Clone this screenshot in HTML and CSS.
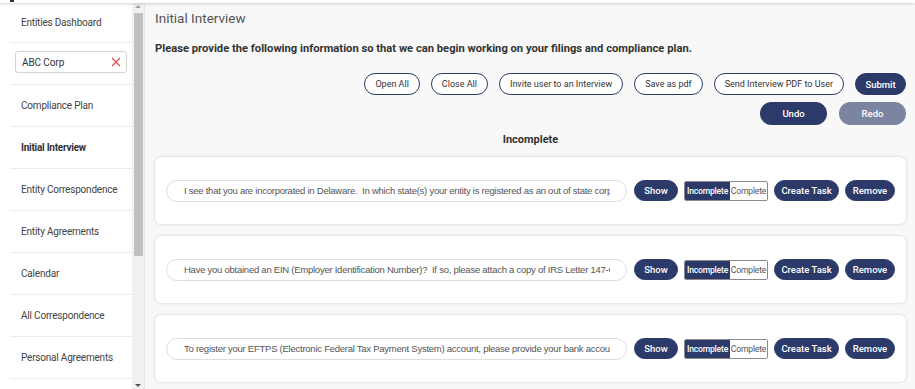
FILE: index.html
```html
<!DOCTYPE html>
<html>
<head>
<meta charset="utf-8">
<link rel="stylesheet" href="styles.css">
</head>
<body>
<div class="topbar"><span class="mark"></span></div>
<div class="layout">
  <nav class="sidebar">
    <div class="nav-item first">Entities Dashboard</div>
    <div class="nav-search">
      <div class="search-box"><span>ABC Corp</span>
        <svg class="clear" width="10" height="10" viewBox="0 0 10 10"><path d="M1 1L9 9M9 1L1 9" stroke="#e0474c" stroke-width="1.2" fill="none"/></svg>
      </div>
    </div>
    <div class="nav-item">Compliance Plan</div>
    <div class="nav-item active">Initial Interview</div>
    <div class="nav-item">Entity Correspondence</div>
    <div class="nav-item">Entity Agreements</div>
    <div class="nav-item">Calendar</div>
    <div class="nav-item">All Correspondence</div>
    <div class="nav-item">Personal Agreements</div>
  </nav>
  <div class="scrollbar">
    <div class="arrow up"></div>
    <div class="thumb"></div>
    <div class="arrow down"></div>
  </div>
  <main class="main">
    <h1 class="title">Initial Interview</h1>
    <p class="intro">Please provide the following information so that we can begin working on your filings and compliance plan.</p>
    <div class="actions">
      <button class="btn outline">Open All</button>
      <button class="btn outline">Close All</button>
      <button class="btn outline">Invite user to an Interview</button>
      <button class="btn outline">Save as pdf</button>
      <button class="btn outline">Send Interview PDF to User</button>
      <button class="btn solid submit">Submit</button>
    </div>
    <div class="actions second">
      <button class="btn solid wide">Undo</button>
      <button class="btn muted wide">Redo</button>
    </div>
    <h2 class="section">Incomplete</h2>
    <div class="cards">
      <div class="card">
        <div class="question"><span class="qtext">I see that you are incorporated in Delaware.&nbsp; In which state(s) your entity is registered as an out of state corporation?</span></div>
        <button class="btn solid small show">Show</button>
        <div class="toggle"><span class="on">Incomplete</span><span class="off">Complete</span></div>
        <button class="btn solid small task">Create Task</button>
        <button class="btn solid small remove">Remove</button>
      </div>
      <div class="card">
        <div class="question"><span class="qtext">Have you obtained an EIN (Employer Identification Number)?&nbsp; If so, please attach a copy of IRS Letter 147-C or CP 575.</span></div>
        <button class="btn solid small show">Show</button>
        <div class="toggle"><span class="on">Incomplete</span><span class="off">Complete</span></div>
        <button class="btn solid small task">Create Task</button>
        <button class="btn solid small remove">Remove</button>
      </div>
      <div class="card">
        <div class="question"><span class="qtext">To register your EFTPS (Electronic Federal Tax Payment System) account, please provide your bank account information.</span></div>
        <button class="btn solid small show">Show</button>
        <div class="toggle"><span class="on">Incomplete</span><span class="off">Complete</span></div>
        <button class="btn solid small task">Create Task</button>
        <button class="btn solid small remove">Remove</button>
      </div>
    </div>
  </main>
</div>
</body>
</html>
```

FILE: styles.css
```css
* { box-sizing: border-box; }
html, body { margin: 0; height: 100%; overflow: hidden; }
body {
  font-family: Roboto, "Liberation Sans", sans-serif;
  background: #f8f8f8;
  color: #333;
}
.topbar {
  height: 3px;
  background: #fff;
  box-shadow: 0 1px 3px rgba(0,0,0,0.18);
  position: relative;
  z-index: 2;
}
.topbar .mark {
  position: absolute; left: 10px; top: 0; width: 4px; height: 2px; background: #333;
}
.layout { display: flex; height: 386px; }
.sidebar {
  width: 132px;
  background: #fff;
  flex: none;
}
.nav-item {
  height: 42px;
  display: flex;
  align-items: center;
  font-size: 10px;
  letter-spacing: -0.2px;
  color: #444;
  border-bottom: 1px solid #ececec;
  margin-left: 10px;
  padding-left: 11px;
}
.nav-item.first { height: 40px; }
.nav-item.active { font-weight: 700; color: #333; letter-spacing: -0.25px; }
.nav-search {
  height: 42px;
  border-bottom: 1px solid #ececec;
  margin-left: 10px;
  padding: 8px 5px 0 5px;
}
.search-box {
  height: 22px;
  border: 1px solid #d4d4d4;
  border-radius: 3px;
  display: flex;
  align-items: center;
  justify-content: space-between;
  padding: 0 5px 0 6px;
  font-size: 10px;
  letter-spacing: -0.1px;
  color: #333;
}
.scrollbar {
  width: 13px;
  flex: none;
  background: #f1f1f1;
  display: flex;
  flex-direction: column;
  align-items: center;
  border-right: 1px solid #e6e6e6;
}
.arrow { width: 0; height: 0; border-left: 3px solid transparent; border-right: 3px solid transparent; }
.arrow.up { border-bottom: 3px solid #a3a3a3; margin-top: 2px; }
.arrow.down { border-top: 3px solid #505050; margin-top: auto; margin-bottom: 2px; }
.thumb { width: 9px; height: 243px; background: #c1c1c1; margin-top: 5px; }
.main {
  flex: 1;
  padding: 3px 9px 0 10px;
  min-width: 0;
}
.title {
  margin: 0;
  font-size: 13.5px;
  font-weight: 400;
  line-height: 24px;
  color: #555;
}
.intro {
  margin: 11px 0 0;
  font-size: 11.2px;
  font-weight: 700;
  line-height: 16px;
  color: #333;
}
.actions {
  display: flex;
  justify-content: flex-end;
  gap: 11px;
  margin-top: 16px;
}
.actions.second { margin-top: 7px; gap: 12px; }
.btn {
  font-family: Roboto, sans-serif;
  height: 22px;
  border-radius: 11px;
  font-size: 9px;
  padding: 0 10px;
  cursor: pointer;
  white-space: nowrap;
}
.btn.outline {
  background: #fff;
  border: 1px solid #2c3a69;
  color: #333;
}
.btn.solid {
  background: #2c3a69;
  border: 1px solid #2c3a69;
  color: #fff;
  font-weight: 500;
}
.btn.muted {
  background: #7b84a1;
  border: 1px solid #7b84a1;
  color: #fff;
  font-weight: 500;
}
.btn.submit { width: 51px; padding: 0; font-size: 9.5px; }
.btn.wide { width: 67px; height: 23px; font-size: 9.5px; }
.section {
  margin: 7px 0 0;
  text-align: center;
  font-size: 11px;
  font-weight: 700;
  line-height: 16px;
  color: #333;
}
.cards { display: flex; flex-direction: column; gap: 12px; margin-top: 9px; }
.card {
  background: #fff;
  border-radius: 6px;
  box-shadow: 0 0 3px rgba(0,0,0,0.18);
  height: 67px;
  padding: 0 11px;
  display: flex;
  align-items: center;
  gap: 6px;
}
.question {
  flex: 1;
  min-width: 0;
  height: 22px;
  border: 1px solid #dedede;
  border-radius: 11px;
  padding: 0 16px 0 17px;
  margin-right: 1px;
  display: flex;
  align-items: center;
}
.qtext {
  display: block;
  width: 100%;
  overflow: hidden;
  white-space: nowrap;
  font-family: "Liberation Sans", Arial, sans-serif;
  font-size: 9.5px;
  letter-spacing: -0.25px;
  color: #555;
  line-height: 14px;
}
.btn.small { height: 21px; font-size: 9.5px; padding: 0; }
.btn.show { width: 44px; }
.btn.task { width: 65px; }
.btn.remove { width: 50px; }
.toggle {
  display: flex;
  height: 20px;
  width: 84px;
  border: 1px solid #8a8a8a;
  border-radius: 2px;
  overflow: hidden;
  font-size: 8.6px;
  letter-spacing: -0.2px;
}
.toggle span { display: flex; align-items: center; justify-content: center; }
.toggle .on { width: 45px; background: #2c3a69; color: #fff; font-weight: 500; }
.toggle .off { flex: 1; background: #fff; color: #555; }
```
